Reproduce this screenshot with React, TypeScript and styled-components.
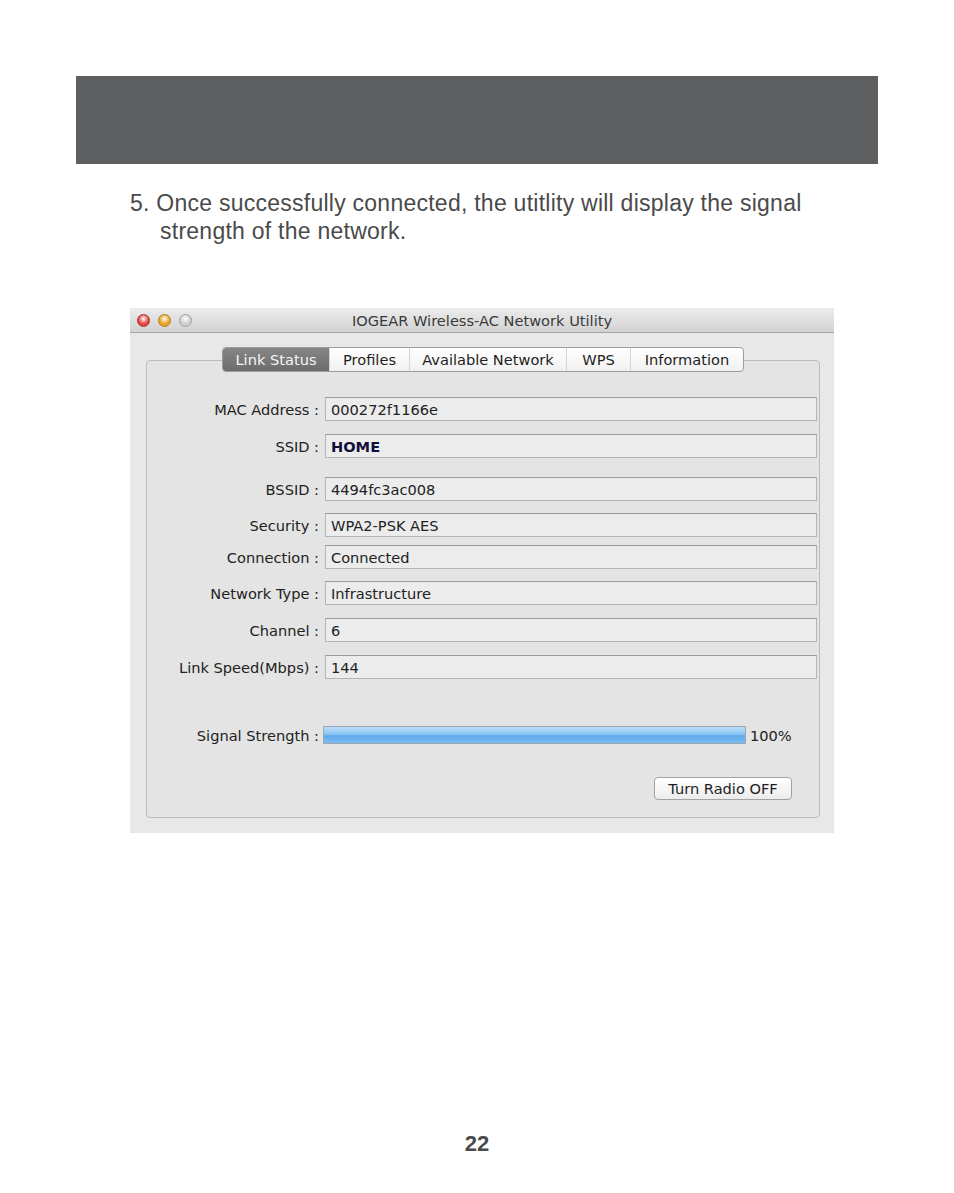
import styled, { createGlobalStyle } from "styled-components";

const GlobalStyle = createGlobalStyle`
  body {
    margin: 0;
    background: #ffffff;
    font-family: "Liberation Sans", Arial, sans-serif;
  }
`;

const Page = styled.div`
  width: 954px;
  height: 1193px;
  display: flex;
  flex-direction: column;
`;

const HeaderBar = styled.div`
  margin: 76px 76px 0 76px;
  height: 88px;
  background: #5e5f61;
`;

const Step = styled.p`
  margin: 25px 0 0 0;
  padding-left: 160px;
  padding-right: 134px;
  text-indent: -30px;
  font-family: "Liberation Sans", Arial, sans-serif;
  font-size: 23px;
  letter-spacing: 0.25px;
  line-height: 28px;
  color: #4a4a4a;
`;

const Window = styled.div`
  margin: 63px 0 0 130px;
  width: 704px;
  height: 525px;
  background: #e8e8e8;
  display: flex;
  flex-direction: column;
  font-family: "DejaVu Sans", "Lucida Grande", sans-serif;
  color: #222222;
`;

const TitleBar = styled.div`
  height: 24px;
  flex-shrink: 0;
  display: flex;
  align-items: center;
  position: relative;
  background: linear-gradient(#ececec, #d2d2d2);
  border-bottom: 1px solid #a4a4a4;
  border-radius: 4px 4px 0 0;
`;

const Lights = styled.div`
  display: flex;
  gap: 8px;
  padding-left: 7px;
`;

const Light = styled.span<{ $color: string; $edge: string }>`
  width: 13px;
  height: 13px;
  border-radius: 50%;
  background: radial-gradient(circle at 50% 35%, #ffffff 0%, ${p => p.$color} 55%);
  border: 1px solid ${p => p.$edge};
  box-sizing: border-box;
`;

const Title = styled.div`
  position: absolute;
  left: 0;
  right: 0;
  text-align: center;
  font-size: 14.6px;
  color: #3a3a3a;
  pointer-events: none;
`;

const Body = styled.div`
  flex: 1;
  padding: 14px 14px 15px 16px;
  display: flex;
  flex-direction: column;
`;

const Tabs = styled.div`
  align-self: center;
  display: flex;
  height: 23px;
  border: 1px solid #9c9c9c;
  border-radius: 4px;
  background: linear-gradient(#ffffff, #f1f1f1);
  position: relative;
  z-index: 1;
  margin-bottom: -12px;
  overflow: hidden;
`;

const Tab = styled.div<{ $w: number; $active?: boolean }>`
  width: ${p => p.$w}px;
  display: flex;
  align-items: center;
  justify-content: center;
  font-size: 14.6px;
  color: ${p => (p.$active ? "#f4f4f4" : "#1e1e1e")};
  background: ${p => (p.$active ? "linear-gradient(#868686, #6c6c6c)" : "transparent")};
  border-left: 1px solid ${p => (p.$active ? "transparent" : "#d4d4d4")};
  &:first-child {
    border-left: none;
  }
`;

const Group = styled.div`
  flex: 1;
  border: 1px solid #bcbcbc;
  border-radius: 4px;
  background: #e4e4e4;
  padding: 36px 2px 0 0;
  display: flex;
  flex-direction: column;
`;

const Row = styled.div<{ $top: number }>`
  display: flex;
  align-items: center;
  margin-top: ${p => p.$top}px;
`;

const Label = styled.div`
  width: 172px;
  flex-shrink: 0;
  text-align: right;
  font-size: 14.6px;
  white-space: nowrap;
`;

const Field = styled.div<{ $strong?: boolean }>`
  flex: 1;
  height: 24px;
  margin-left: 6px;
  box-sizing: border-box;
  border: 1px solid #b4b4b4;
  border-top-color: #9a9a9a;
  background: #ececec;
  padding: 0 5px;
  display: flex;
  align-items: center;
  font-size: 14.6px;
  font-weight: ${p => (p.$strong ? "bold" : "normal")};
  color: ${p => (p.$strong ? "#10103a" : "#222222")};
`;

const SignalRow = styled.div`
  display: flex;
  align-items: center;
  margin-top: 47px;
`;

const Meter = styled.div`
  width: 423px;
  height: 18px;
  margin-left: 4px;
  box-sizing: border-box;
  border: 1px solid #9aa6b2;
  background: linear-gradient(#b9dcf8 0%, #8cc4f2 45%, #5fa8ec 55%, #7dbcf4 100%);
`;

const Percent = styled.div`
  margin-left: 4px;
  font-size: 14.6px;
`;

const ButtonRow = styled.div`
  display: flex;
  justify-content: flex-end;
  margin-top: 33px;
  padding-right: 25px;
`;

const Button = styled.button`
  width: 138px;
  height: 23px;
  border: 1px solid #a2a2a2;
  border-radius: 4px;
  background: linear-gradient(#ffffff, #ececec);
  font-family: "DejaVu Sans", "Lucida Grande", sans-serif;
  font-size: 14.6px;
  color: #1e1e1e;
  padding: 0;
`;

const PageNumber = styled.div`
  margin-top: auto;
  margin-bottom: 36px;
  text-align: center;
  font-family: "Liberation Sans", Arial, sans-serif;
  font-weight: bold;
  font-size: 22px;
  color: #4a4a4a;
`;

const fields = [
  { label: "MAC Address :", value: "000272f1166e", top: 0 },
  { label: "SSID :", value: "HOME", top: 13, strong: true },
  { label: "BSSID :", value: "4494fc3ac008", top: 19 },
  { label: "Security :", value: "WPA2-PSK AES", top: 12 },
  { label: "Connection :", value: "Connected", top: 8 },
  { label: "Network Type :", value: "Infrastructure", top: 12 },
  { label: "Channel :", value: "6", top: 13 },
  { label: "Link Speed(Mbps) :", value: "144", top: 13 },
];

const tabs = [
  { name: "Link Status", w: 106, active: true },
  { name: "Profiles", w: 79 },
  { name: "Available Network", w: 156 },
  { name: "WPS", w: 63 },
  { name: "Information", w: 112 },
];

export default function App() {
  return (
    <Page>
      <GlobalStyle />
      <HeaderBar />
      <Step>
        5. Once successfully connected, the utitlity will display the signal strength of the network.
      </Step>
      <Window>
        <TitleBar>
          <Lights>
            <Light $color="#e2463f" $edge="#a8322c" />
            <Light $color="#e9a52a" $edge="#b07a1c" />
            <Light $color="#cfcfcf" $edge="#a0a0a0" />
          </Lights>
          <Title>IOGEAR Wireless-AC Network Utility</Title>
        </TitleBar>
        <Body>
          <Tabs>
            {tabs.map(t => (
              <Tab key={t.name} $w={t.w} $active={t.active}>
                {t.name}
              </Tab>
            ))}
          </Tabs>
          <Group>
            {fields.map(f => (
              <Row key={f.label} $top={f.top}>
                <Label>{f.label}</Label>
                <Field $strong={f.strong}>{f.value}</Field>
              </Row>
            ))}
            <SignalRow>
              <Label>Signal Strength :</Label>
              <Meter />
              <Percent>100%</Percent>
            </SignalRow>
            <ButtonRow>
              <Button>Turn Radio OFF</Button>
            </ButtonRow>
          </Group>
        </Body>
      </Window>
      <PageNumber>22</PageNumber>
    </Page>
  );
}
